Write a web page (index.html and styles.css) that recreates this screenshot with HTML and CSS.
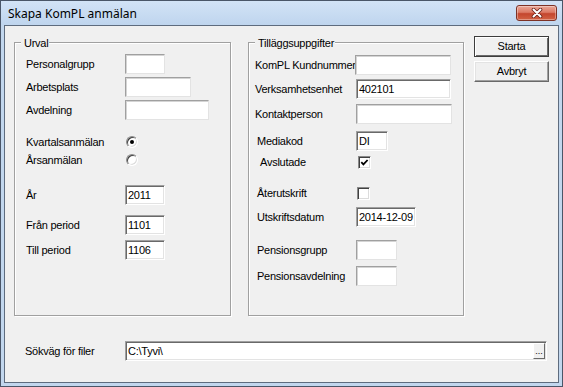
FILE: index.html
```
<!DOCTYPE html>
<html lang="sv">
<head>
<meta charset="utf-8">
<title>Skapa KomPL anmälan</title>
<link rel="stylesheet" href="styles.css">
</head>
<body>
<div class="window">
  <div class="titlebar">
    <span class="title">Skapa KomPL anmälan</span>
    <div class="close">
      <svg width="14" height="10" viewBox="0 0 14 10"><path d="M3.5 1.5 L10.5 8.5 M10.5 1.5 L3.5 8.5" stroke="#6b2219" stroke-width="3.6" stroke-linecap="round"/><path d="M3.5 1.5 L10.5 8.5 M10.5 1.5 L3.5 8.5" stroke="#fff" stroke-width="2" stroke-linecap="round"/></svg>
    </div>
  </div>
  <div class="client">
    <div class="top">
      <div class="group g1">
        <div class="legend">Urval</div>
        <div class="row mt11"><span class="lbl">Personalgrupp</span><span class="tb lt w40"></span></div>
        <div class="row mt3"><span class="lbl">Arbetsplats</span><span class="tb lt w66"></span></div>
        <div class="row mt3"><span class="lbl">Avdelning</span><span class="tb lt w84"></span></div>
        <div class="row sm mt14"><span class="lbl">Kvartalsanmälan</span><span class="radio on"></span></div>
        <div class="row sm mt2"><span class="lbl">Årsanmälan</span><span class="radio"></span></div>
        <div class="row mt17"><span class="lbl">År</span><span class="tb w40">2011</span></div>
        <div class="row mt10"><span class="lbl">Från period</span><span class="tb w40">1101</span></div>
        <div class="row mt5"><span class="lbl">Till period</span><span class="tb w40">1106</span></div>
      </div>
      <div class="group g2">
        <div class="legend">Tilläggsuppgifter</div>
        <div class="row mt12"><span class="lbl">KomPL Kundnummer</span><span class="tb lt w96 pull1"></span></div>
        <div class="row mt4"><span class="lbl">Verksamhetsenhet</span><span class="tb w95">402101</span></div>
        <div class="row mt5"><span class="lbl">Kontaktperson</span><span class="tb lt w96"></span></div>
        <div class="row mt7"><span class="lbl ind2">Mediakod</span><span class="tb w32">DI</span></div>
        <div class="row sm mt3"><span class="lbl ind5">Avslutade</span><span class="check on push2"><svg width="9" height="9" viewBox="0 0 9 9"><polyline points="1.3,4.2 3.4,6.4 7.6,2" fill="none" stroke="#000" stroke-width="1.8"/></svg></span></div>
        <div class="row sm mt15"><span class="lbl ind2">Återutskrift</span><span class="check push1"></span></div>
        <div class="row mt6"><span class="lbl ind2">Utskriftsdatum</span><span class="tb w60">2014-12-09</span></div>
        <div class="row mt13"><span class="lbl ind2">Pensionsgrupp</span><span class="tb lt w41"></span></div>
        <div class="row mt6"><span class="lbl ind2">Pensionsavdelning</span><span class="tb lt w41"></span></div>
      </div>
      <div class="buttons">
        <div class="btn default">Starta</div>
        <div class="btn">Avbryt</div>
      </div>
    </div>
    <div class="pathrow">
      <span class="lbl">Sökväg för filer</span>
      <div class="tb path"><span class="val">C:\Tyvi\</span><span class="ell">...</span></div>
    </div>
  </div>
</div>
</body>
</html>
```
FILE: styles.css
```
html, body {
  margin: 0;
  padding: 0;
  background: #fff;
}

.window {
  width: 563px;
  height: 387px;
  box-sizing: border-box;
  border: 1px solid #4a5668;
  background: #c2d7ee;
  padding: 0 3px 3px;
  display: flex;
  flex-direction: column;
  font-family: "Liberation Sans", Arial, sans-serif;
  font-size: 11px;
  letter-spacing: -0.25px;
  color: #000;
}

.titlebar {
  height: 24px;
  margin: 0 -3px;
  padding-left: 7px;
  background: linear-gradient(#d2e3f6, #bfd5ee);
  display: flex;
  justify-content: space-between;
  align-items: flex-start;
}

.title {
  margin-top: 4px;
  line-height: 18px;
  font-family: "Noto Sans", "Open Sans", sans-serif;
  font-size: 12px;
  letter-spacing: 0;
}

.close {
  margin-top: 4px;
  margin-right: 5px;
  width: 41px;
  height: 16px;
  box-sizing: border-box;
  border: 1px solid #7d3226;
  border-radius: 3px;
  background: linear-gradient(#eaa898 0%, #dc7a65 45%, #c4462e 55%, #d26244 100%);
  box-shadow: inset 0 0 0 1px rgba(255,255,255,0.35);
  display: flex;
  align-items: center;
  justify-content: center;
}

.client {
  flex: 1;
  border: 1px solid #5e6c7e;
  background: #f0f0f0;
  display: flex;
  flex-direction: column;
}

.top {
  display: flex;
  align-items: flex-start;
  padding: 10px 0 0 9px;
}

.group {
  position: relative;
  box-sizing: border-box;
  height: 274px;
  margin-top: 6px;
  border: 1px solid #a0a0a0;
  box-shadow: 1px 1px 0 #fff, inset 1px 1px 0 #fff;
}

.g1 {
  width: 217px;
  padding-left: 11px;
}

.g1 .lbl {
  width: 99px;
}

.g2 {
  width: 216px;
  margin-left: 17px;
  padding-left: 6px;
}

.g2 .lbl {
  width: 101px;
}

.legend {
  position: absolute;
  top: -6px;
  left: 6px;
  padding: 0 1px 0 3px;
  line-height: 13px;
  background: #f0f0f0;
}

.row {
  display: flex;
  align-items: center;
  height: 20px;
}

.row.sm {
  height: 16px;
}

.lbl {
  box-sizing: border-box;
  line-height: 13px;
  white-space: nowrap;
  flex: none;
}

.ind2 { padding-left: 2px; }
.ind5 { padding-left: 5px; }

.mt2 { margin-top: 2px; }
.mt3 { margin-top: 3px; }
.mt4 { margin-top: 4px; }
.mt5 { margin-top: 5px; }
.mt6 { margin-top: 6px; }
.mt7 { margin-top: 7px; }
.mt10 { margin-top: 10px; }
.mt11 { margin-top: 11px; }
.mt12 { margin-top: 12px; }
.mt13 { margin-top: 13px; }
.mt14 { margin-top: 14px; }
.mt15 { margin-top: 15px; }
.mt17 { margin-top: 17px; }

.tb {
  box-sizing: border-box;
  height: 20px;
  background: #fff;
  border: 1px solid;
  border-color: #a0a0a0 #fff #fff #a0a0a0;
  box-shadow: inset 1px 1px 0 #696969, inset -1px -1px 0 #e3e3e3;
  padding-left: 2px;
  line-height: 18px;
  white-space: nowrap;
  flex: none;
}

.tb.lt {
  border-color: #a0a0a0 #e3e3e3 #e3e3e3 #a0a0a0;
  box-shadow: inset 1px 1px 0 #d4d4d4;
}

.w32 { width: 32px; }
.w40 { width: 40px; }
.w41 { width: 41px; }
.w60 { width: 60px; }
.w66 { width: 66px; }
.w84 { width: 84px; }
.w95 { width: 95px; }
.w96 { width: 96px; }
.pull1 { margin-left: -1px; }

.radio {
  box-sizing: border-box;
  width: 12px;
  height: 12px;
  margin-left: 1px;
  border-radius: 50%;
  border: 1px solid;
  border-color: #8a8a8a #fff #fff #8a8a8a;
  background: #fff;
  box-shadow: inset 1px 1px 0 #404040, inset -1px -1px 0 #dcdcdc;
  display: flex;
  align-items: center;
  justify-content: center;
  flex: none;
}

.radio.on::after {
  content: "";
  width: 4px;
  height: 4px;
  border-radius: 50%;
  background: #000;
}

.check {
  box-sizing: border-box;
  width: 13px;
  height: 13px;
  border: 1px solid;
  border-color: #8a8a8a #fff #fff #8a8a8a;
  background: #fff;
  box-shadow: inset 1px 1px 0 #404040, inset -1px -1px 0 #dcdcdc;
  display: flex;
  align-items: center;
  justify-content: center;
  flex: none;
}

.check svg {
  display: block;
}

.push1 { margin-left: 1px; }
.push2 { margin-left: 2px; }

.buttons {
  margin-left: 10px;
  display: flex;
  flex-direction: column;
  gap: 4px;
}

.btn {
  box-sizing: border-box;
  width: 75px;
  height: 21px;
  border: 1px solid;
  border-color: #fff #696969 #696969 #fff;
  box-shadow: inset -1px -1px 0 #a0a0a0, inset 1px 1px 0 #e3e3e3;
  background: #f0f0f0;
  text-align: center;
  line-height: 19px;
}

.btn.default {
  border-color: #3c3c3c;
  box-shadow: inset 1px 1px 0 #fff, inset -1px -1px 0 #696969;
}

.pathrow {
  display: flex;
  align-items: center;
  height: 20px;
  margin-top: 25px;
  padding-left: 20px;
}

.pathrow .lbl {
  width: 100px;
}

.tb.path {
  width: 422px;
  display: flex;
  align-items: stretch;
  padding-right: 1px;
}

.val {
  flex: 1;
}

.ell {
  box-sizing: border-box;
  width: 12px;
  margin: 1px 0;
  border: 1px solid;
  border-color: #fff #696969 #696969 #fff;
  background: #f0f0f0;
  font-size: 9px;
  line-height: 14px;
  text-align: center;
  letter-spacing: 0;
}
```
